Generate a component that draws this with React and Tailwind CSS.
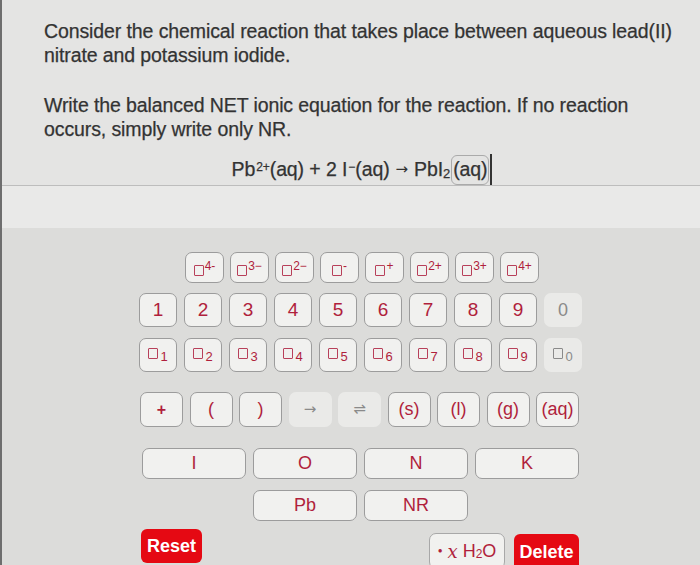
import React from "react";

const font = { fontFamily: '"Liberation Sans", Arial, sans-serif' };
const dv = { fontFamily: '"DejaVu Sans", sans-serif' };

function Sq({ className = "" }) {
  return (
    <span
      className={
        "inline-block w-[10px] h-[11px] border border-[#b8405a] rounded-[1px] " +
        className
      }
    />
  );
}

function Key({ children, className = "", disabled = false }) {
  return (
    <div
      className={
        "flex items-center justify-center rounded-[7px] " +
        (disabled
          ? "bg-[#eaeae8] text-[#8a8a8a] "
          : "bg-[#f1f1ef] border border-[#9c9c9c] text-[#b01f3c] ") +
        className
      }
    >
      {children}
    </div>
  );
}

export default function App() {
  const sups = ["4-", "3−", "2−", "-", "+", "2+", "3+", "4+"];
  const digits = ["1", "2", "3", "4", "5", "6", "7", "8", "9"];
  return (
    <div
      className="w-[700px] h-[565px] overflow-hidden bg-[#e4e4e3] border-l-2 border-[#6e6e6e] flex flex-col"
      style={font}
    >
      <div className="shrink-0 pl-[42px] pr-4 pt-[20px] text-[#333] text-[19.5px] leading-[23.5px] tracking-[-0.1px] [-webkit-text-stroke:0.25px_#333]">
        <p>
          Consider the chemical reaction that takes place between aqueous lead(II)
          <br />
          nitrate and potassium iodide.
        </p>
        <p className="mt-[27px]">
          Write the balanced NET ionic equation for the reaction. If no reaction
          <br />
          occurs, simply write only NR.
        </p>
        <div className="mt-[14px] flex justify-center pr-[4px] h-[30px] items-center">
          <span className="flex items-center">
            Pb<sup className="text-[12px] -top-[3px] ml-[1px]">2+</sup>(aq) + 2 I
            <sup className="text-[12px] -top-[3px] ml-[1px]">−</sup>(aq)
            <span className="mx-[6px] text-[15px] [-webkit-text-stroke:0px]" style={dv}>→</span>PbI
            <sub className="text-[13px] top-[4px]">2</sub>
            <span className="border border-[#aaa] rounded-[6px] px-[1px] h-[30px] flex items-center ml-[1px]">(aq)</span>
            <span className="w-[2px] h-[32px] bg-[#333] ml-[1px]" />
          </span>
        </div>
      </div>
      <div className="shrink-0 h-[1px] bg-[#bdbdbd]" />
      <div className="shrink-0 h-[42px] bg-[#e9e9e8]" />
      <div className="shrink-0 bg-[#dcdcda] pt-[24px] pb-[20px]">
        <div className="ml-[137px] w-[446px] flex flex-col">
          {/* row 1 */}
          <div className="flex justify-center gap-[6px]">
            {sups.map((s, i) => (
              <Key key={i} className="w-[39px] h-[31px]">
                <span className="flex items-start">
                  <Sq className="mt-[6px]" />
                  <span className="text-[12px] leading-[12px] ml-[1px] mt-[1px]">{s}</span>
                </span>
              </Key>
            ))}
          </div>
          {/* row 2 */}
          <div className="flex gap-[7px] mt-[10px]">
            {digits.map((d) => (
              <Key key={d} className="w-[38px] h-[34px] text-[19px]">
                {d}
              </Key>
            ))}
            <Key disabled className="w-[38px] h-[34px] text-[18px]">
              0
            </Key>
          </div>
          {/* row 3 */}
          <div className="flex gap-[7px] mt-[11px]">
            {digits.map((d) => (
              <Key key={d} className="w-[38px] h-[34px]">
                <span className="flex items-end">
                  <Sq className="mb-[4px]" />
                  <span className="text-[13px] leading-[13px] ml-[2px]">{d}</span>
                </span>
              </Key>
            ))}
            <Key disabled className="w-[38px] h-[34px]">
              <span className="flex items-end">
                <span className="inline-block w-[10px] h-[11px] border border-[#8a8a8a] rounded-[1px] mb-[4px]" />
                <span className="text-[13px] leading-[13px] ml-[2px]">0</span>
              </span>
            </Key>
          </div>
          {/* row 4 */}
          <div className="flex gap-[6.5px] mt-[20px] pl-[1px]">
            <Key className="w-[43px] h-[35px] text-[16px] font-bold">+</Key>
            <Key className="w-[43px] h-[35px] text-[18px]">(</Key>
            <Key className="w-[43px] h-[35px] text-[18px]">)</Key>
            <Key disabled className="w-[43px] h-[35px] text-[15px]"><span style={dv}>→</span></Key>
            <Key disabled className="w-[43px] h-[35px] text-[15px]"><span style={dv}>⇌</span></Key>
            <Key className="w-[43px] h-[35px] text-[18px]">(s)</Key>
            <Key className="w-[43px] h-[35px] text-[18px]">(l)</Key>
            <Key className="w-[43px] h-[35px] text-[18px]">(g)</Key>
            <Key className="w-[43px] h-[35px] text-[18px]">(aq)</Key>
          </div>
          {/* row 5/6 */}
          <div className="grid grid-cols-[104px_104px_104px_104px] gap-x-[7px] gap-y-[11px] mt-[21px] pl-[3px]">
            <Key className="h-[31px] text-[18px]">I</Key>
            <Key className="h-[31px] text-[18px]">O</Key>
            <Key className="h-[31px] text-[18px]">N</Key>
            <Key className="h-[31px] text-[18px]">K</Key>
            <div />
            <Key className="h-[31px] text-[18px]">Pb</Key>
            <Key className="h-[31px] text-[18px]">NR</Key>
          </div>
          {/* bottom */}
          <div className="flex items-start mt-[8px] pl-[2px]">
            <div className="w-[61px] h-[34px] rounded-[6px] bg-[#e50913] text-white text-[18px] font-bold flex items-center justify-center">
              Reset
            </div>
            <div className="flex-1" />
            <div className="mt-[4px] w-[76px] h-[36px] rounded-[7px] bg-[#f1f1ef] border border-[#a8a8a8] text-[#b01f3c] text-[18px] flex items-center justify-center">
              <span className="text-[8px] mr-[5px]">●</span>
              <span className="italic" style={{ fontFamily: '"DejaVu Serif", serif' }}>x</span>
              <span className="ml-[5px]">H</span>
              <sub className="text-[12px]">2</sub>
              <span>O</span>
            </div>
            <div className="mt-[5px] ml-[9px] mr-[6px] w-[65px] h-[36px] rounded-[6px] bg-[#e50913] text-white text-[18px] font-bold flex items-center justify-center">
              Delete
            </div>
          </div>
        </div>
      </div>
    </div>
  );
}
